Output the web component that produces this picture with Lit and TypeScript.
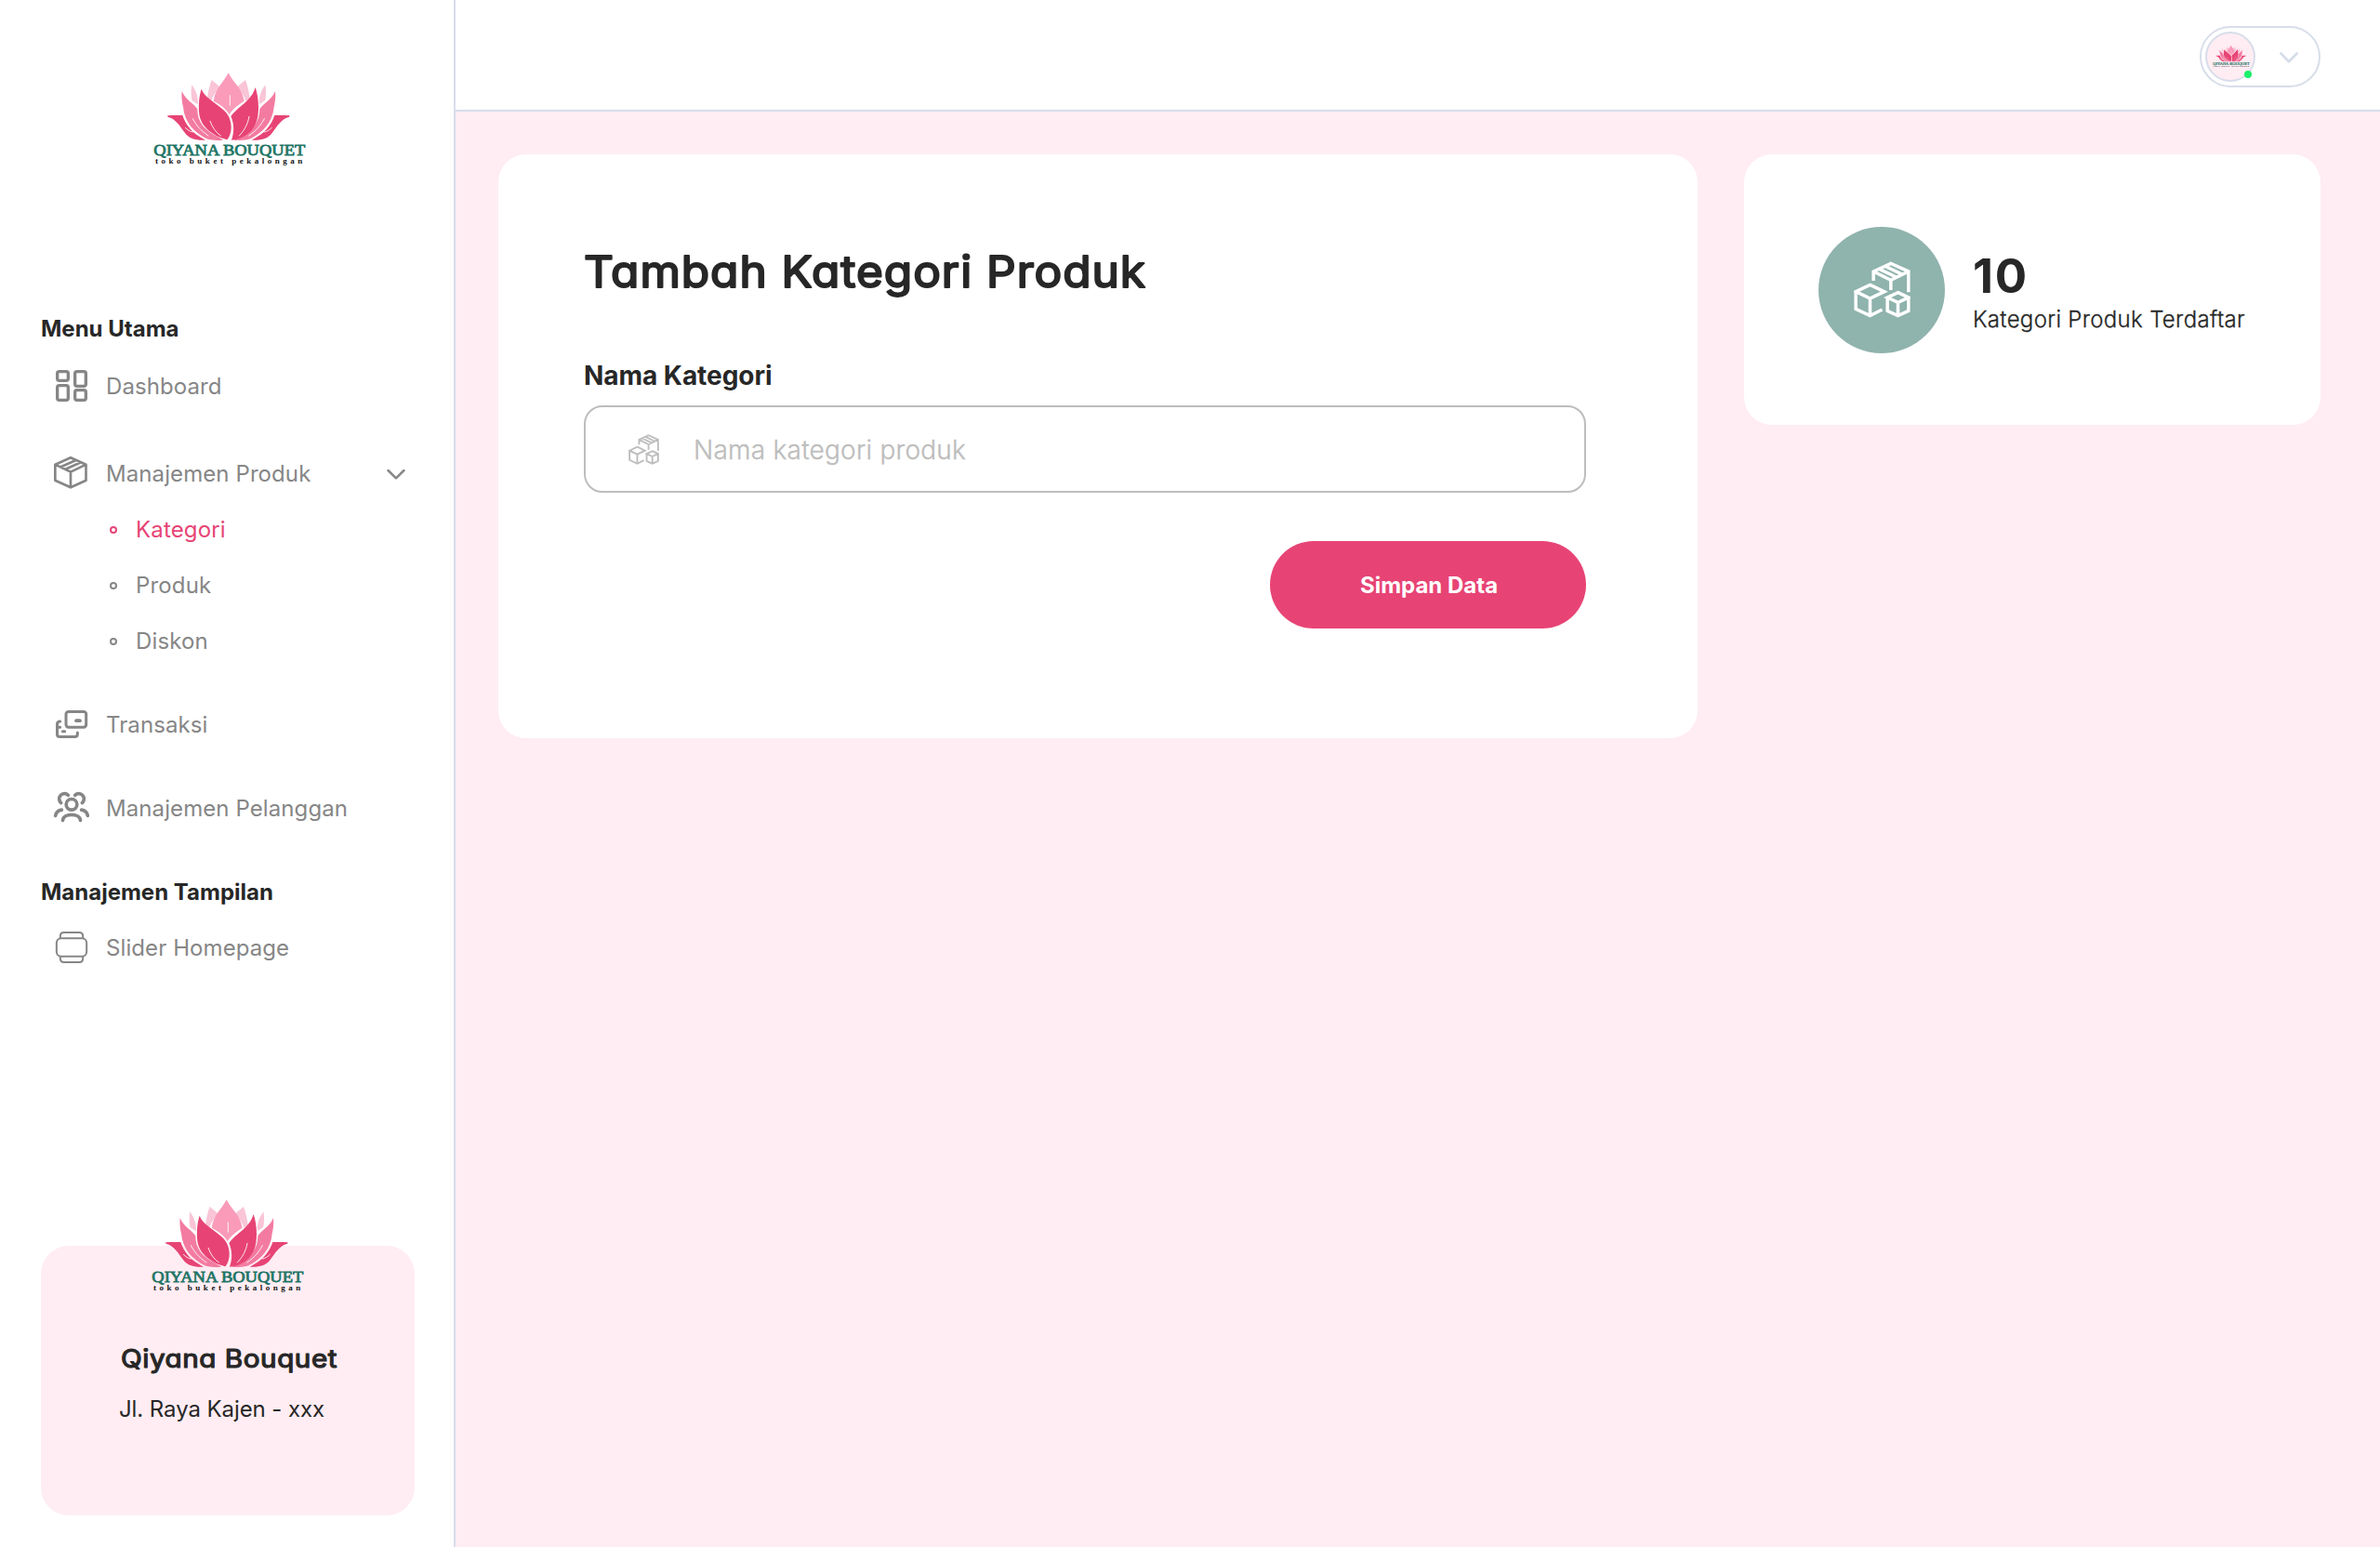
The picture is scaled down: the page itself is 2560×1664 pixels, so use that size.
import { LitElement, html, svg, css } from "lit";
import { customElement, property } from "lit/decorators.js";
import { classMap } from "lit/directives/class-map.js";

const halfFlower = svg`
  <path fill="#f9c5d7" d="M263 78 L291 101 C276 116 266 130 262 146 L249 136 C252 114 256 96 263 78Z"/>
  <path fill="#f9c5d7" d="M199 94 C209 108 215 120 218 138 L219 156 C212 152 205 149 199 143 C196 125 196 110 199 94Z"/>
  <path fill="#f37ba1" d="M167 114 C178 142 204 152 217 172 C217 215 240 240 283 262 C290 266 296 269 300 272 C280 274 262 273 247 268 C206 246 175 215 171 165 C167 150 165 130 167 114Z"/>
  <path fill="#e74475" d="M121 193 C138 191 152 192 169 192 C180 225 200 250 243 272 C215 274 190 268 177 249 C160 226 148 204 121 197Z"/>
  <path class="vein" d="M202 203 C214 225 226 240 252 258"/>
  <path class="vein" d="M178 232 C186 240 192 244 202 246"/>`;

@customElement("brand-logo")
export class BrandLogo extends LitElement {
  static styles = css`
    :host { display: block; }
    svg { display: block; width: 100%; height: 100%; overflow: visible; }
    .vein { fill: none; stroke: #fff; stroke-width: 2.6; stroke-linecap: round; }
    .name { font: 400 53px "Liberation Serif", serif; fill: #1f7566; stroke: #1f7566; stroke-width: 2.4px; }
    .tag { font: 700 27px "Liberation Serif", serif; fill: #151515; }
  `;
  render() {
    return html`<svg viewBox="0 0 630 390">
      ${halfFlower}
      <g transform="translate(635 0) scale(-1 1)">${halfFlower}</g>
      <path fill="#f99bb9" d="M317 55 C301 88 276 102 269 146 C291 158 310 170 320 190 C330 172 350 158 368 146 C360 102 333 88 317 55Z"/>
      <path fill="#e74475" d="M230 107 C246 147 306 162 320 200 C331 228 326 254 313 271 C275 262 230 235 223 190 C220 160 222 130 230 107Z"/>
      <path fill="#e74475" d="M404 102 C392 147 345 165 325 195 C337 222 335 250 327 272 C372 268 405 240 412 195 C417 160 412 125 404 102Z"/>
      <path class="vein" d="M258 211 C266 232 276 247 292 258"/>
      <path class="vein" d="M384 196 C379 222 369 240 352 258"/>
      <path class="vein" d="M322 128 V160"/>
      <text class="name" x="76" y="321" textLength="489" lengthAdjust="spacingAndGlyphs">QIYANA BOUQUET</text>
      <text class="tag" x="81" y="348" textLength="475">toko buket pekalongan</text>
    </svg>`;
  }
}

const icons = {
  dashboard: svg`<svg viewBox="81 228 120 120" fill="none" stroke="currentColor" stroke-width="10">
    <rect x="95" y="239" width="35" height="29" rx="6"/><rect x="152" y="239" width="35" height="47" rx="6"/>
    <rect x="95" y="284" width="35" height="47" rx="6"/><rect x="152" y="299" width="35" height="32" rx="6"/></svg>`,
  box: svg`<svg viewBox="81 510 120 120" fill="none" stroke="currentColor" stroke-width="8" stroke-linejoin="round">
    <path d="M138 516.500 L187.500 539 V590 L138 613 L88 590 V539 Z M88 539 L138 563 L187.500 539 M138 563 V613 M106 547 L155 525 M121 554 L171 532"/></svg>`,
  cards: svg`<svg viewBox="81 60 120 120" fill="none" stroke="currentColor" stroke-width="9" stroke-linecap="round">
    <rect x="123" y="76.500" width="65" height="50" rx="8"/><path d="M104 108 H102 Q94.500 109 94.500 117 V149 Q94.500 157.500 103 157.500 H151 Q160 157.500 160 149 V144 M95 127 H104 M112 140 H119"/>
    <path stroke-width="11" d="M156 105.500 H168"/></svg>`,
  people: svg`<svg viewBox="81 330 120 120" fill="none" stroke="currentColor" stroke-width="11" stroke-linecap="round">
    <circle cx="141" cy="376" r="17.500"/><path d="M112.500 427 C114 403 168 403 169.500 427"/>
    <path d="M89 412 C91 402 98 395 109 393.500 M193 412 C191 402 184 395 173 393.500"/>
    <path d="M107 371 A17 17 0 1 1 130 346 M175 371 A17 17 0 1 0 152 346"/></svg>`,
  slider: svg`<svg viewBox="81 780 120 120" fill="none" stroke="currentColor" stroke-width="6">
    <rect x="92.500" y="808" width="97" height="58" rx="15"/>
    <path d="M104.500 808 V801 Q104.500 789 116.500 789 H165.500 Q177.500 789 177.500 801 V808 M104.500 866 V873 Q104.500 885 116.500 885 H165.500 Q177.500 885 177.500 873 V866"/></svg>`,
};

const boxes = html`<svg viewBox="131 124 182 183" fill="none" stroke="currentColor" stroke-width="10.500">
  <path d="M194 187 V157 L250 131 L307 157 V224 M194 157 L250 185 L307 157 M250 185 V217 M213 149 L269 176 M232 140 L288 167"/>
  <path d="M183 200 L229 222 L183 244 L137 222 Z M137 222 V278 L183 300 L222 280 M183 244 V300"/>
  <path d="M273 225 L307 241 L273 257 L239 241 Z M239 241 V284 L273 300 L307 284 V241 M273 257 V300"/></svg>`;

@customElement("nav-row")
export class NavRow extends LitElement {
  @property() icon = "";
  @property() label = "";
  @property({ type: Boolean }) expandable = false;
  static styles = css`
    :host { display: flex; align-items: center; height: 60px; padding: 0 50px 0 57px; color: #868686; font-size: 24px; line-height: 60px; letter-spacing: 0.09px; }
    .icon { display: flex; width: 40px; height: 40px; margin-right: 17px; }
    .icon svg { width: 40px; height: 40px; }
    .label { flex: 1; white-space: nowrap; }
    .chevron { width: 24px; height: 16px; }
  `;
  render() {
    return html`<span class="icon">${icons[this.icon as keyof typeof icons]}</span>
      <span class="label">${this.label}</span>
      ${this.expandable
        ? html`<svg class="chevron" viewBox="0 0 24 16" fill="none" stroke="currentColor" stroke-width="2.500" stroke-linecap="round" stroke-linejoin="round"><path d="M3.500 4 L12 12.300 L20.500 4"/></svg>`
        : ""}`;
  }
}

@customElement("app-root")
export class AppRoot extends LitElement {
  static styles = css`
    :host { display: block; font-family: Inter, sans-serif; color: #272727; }
    * { box-sizing: border-box; }
    .page { display: flex; width: 2560px; height: 1664px; background: #ffedf3; overflow: hidden; }
    .sidebar { display: flex; flex-direction: column; width: 490px; flex: none; background: #fff; border-right: 2px solid #d7ddea; }
    .logo { width: 210px; height: 130px; margin: 60px 0 134px 140px; }
    .section { height: 60px; padding-left: 44px; font-size: 24px; font-weight: 700; line-height: 60px; }
    .gap-s { margin-top: 2px; }
    .gap-l { margin-top: 34px; }
    .gap-m { margin-top: 30px; }
    .sub { display: flex; align-items: center; gap: 20px; height: 60px; padding-left: 118px; color: #868686; font-size: 24px; line-height: 60px; letter-spacing: 0.15px; }
    .sub.active { color: #e74475; }
    .bullet { width: 8px; height: 8px; border: 2px solid currentColor; border-radius: 50%; }
    .store { display: flex; flex-direction: column; width: 402px; height: 290px; margin: auto 0 34px 44px; background: #ffedf3; border-radius: 30px; }
    .store brand-logo { width: 210px; height: 130px; margin: -68px 0 0 94px; }
    .store-name { height: 48px; margin: 36px 0 0 86px; }
    .address { margin: 10px 0 0 84px; line-height: 40px; font-size: 24px; letter-spacing: -0.08px; }
    .rounded svg { display: block; overflow: visible; }
    .rounded text { font-weight: 400; font-feature-settings: "cv11" 1; fill: #272727; stroke: #272727; stroke-linejoin: round; }
    .content { display: flex; flex-direction: column; flex: 1; }
    .topbar { display: flex; align-items: center; justify-content: flex-end; height: 120px; padding: 4px 64px 0 0; background: #fff; border-bottom: 2px solid #d7ddea; }
    .account { display: flex; align-items: center; justify-content: space-between; width: 130px; height: 66px; padding: 0 22px 0 4px; border: 2px solid #d7ddea; border-radius: 33px; }
    .avatar { position: relative; display: flex; align-items: center; justify-content: center; width: 54px; height: 54px; background: #ffedf3; border: 2px solid #d7ddea; border-radius: 50%; }
    .avatar brand-logo { width: 51px; height: 32px; margin-bottom: 3px; flex: none; }
    .status { position: absolute; right: 2px; bottom: 2px; width: 8px; height: 8px; border-radius: 50%; background: #1af06b; }
    .account-chevron { width: 20px; height: 12px; margin-top: 1px; color: #d7ddea; }
    .main { display: flex; align-items: flex-start; gap: 50px; padding: 46px 64px 0 46px; }
    .card { background: #fff; border-radius: 30px; }
    .form { display: flex; flex-direction: column; width: 1290px; height: 628px; padding: 92px 120px 0 92px; }
    .title { height: 70px; margin: 0; }
    .title text { font-size: 46.5px; stroke-width: 2px; letter-spacing: 0.9px; }
    .store-name text { font-size: 27px; stroke-width: 1.2px; letter-spacing: 0.5px; }
    .field-label { margin-top: 56px; font-size: 28px; line-height: 40px; font-weight: 700; letter-spacing: -0.05px; }
    .field { display: flex; align-items: center; gap: 37px; height: 94px; margin-top: 12px; padding: 0 46px; border: 2px solid #bdbdbd; border-radius: 20px; color: #bdbdbd; }
    .field svg { width: 33px; height: 33px; flex: none; }
    .field input { flex: 1; border: 0; outline: 0; padding: 2px 0 0; background: none; font: 300 28px Inter, sans-serif; letter-spacing: 0.24px; }
    .field input::placeholder { color: #bdbdbd; opacity: 1; -webkit-text-stroke: 0.35px #bdbdbd; }
    .save { align-self: flex-end; width: 340px; height: 94px; margin-top: 52px; padding: 0 0 0 2px; border: 0; border-radius: 47px; background: #e74475; color: #fff; font: 700 24px Inter, sans-serif; }
    .stat { display: flex; align-items: center; gap: 30px; width: 620px; height: 291px; padding-left: 80px; }
    .badge { display: flex; align-items: center; justify-content: center; width: 136px; height: 136px; border-radius: 50%; background: #8fb3ad; color: #fff; }
    .badge svg { width: 61px; height: 61px; }
    .figures { padding-top: 12px; }
    .count { font-size: 51px; font-weight: 700; line-height: 52px; letter-spacing: 1.8px; }
    .caption { font-size: 24px; font-weight: 300; line-height: 41px; letter-spacing: 0.32px; white-space: nowrap; -webkit-text-stroke: 0.3px #272727; }
  `;
  private subItems = ["Kategori", "Produk", "Diskon"];
  render() {
    return html`<div class="page">
      <aside class="sidebar">
        <brand-logo class="logo"></brand-logo>
        <div class="section">Menu Utama</div>
        <nav-row class="gap-s" icon="dashboard" label="Dashboard"></nav-row>
        <nav-row class="gap-l" icon="box" label="Manajemen Produk" expandable></nav-row>
        ${this.subItems.map((s, i) => html`<div class=${classMap({ sub: true, active: i === 0 })}><span class="bullet"></span>${s}</div>`)}
        <nav-row class="gap-m" icon="cards" label="Transaksi"></nav-row>
        <nav-row class="gap-m" icon="people" label="Manajemen Pelanggan"></nav-row>
        <div class="section gap-m">Manajemen Tampilan</div>
        <nav-row icon="slider" label="Slider Homepage"></nav-row>
        <div class="store">
          <brand-logo></brand-logo>
          <div class="store-name rounded"><svg width="240" height="48"><text x="0" y="33" textLength="233" lengthAdjust="spacingAndGlyphs">Qiyana Bouquet</text></svg></div>
          <div class="address">Jl. Raya Kajen - xxx</div>
        </div>
      </aside>
      <div class="content">
        <header class="topbar">
          <div class="account">
            <div class="avatar"><brand-logo></brand-logo><span class="status"></span></div>
            <svg class="account-chevron" viewBox="0 0 20 12" fill="none" stroke="currentColor" stroke-width="2.800" stroke-linecap="round" stroke-linejoin="round"><path d="M1.500 1.500 L10 10.300 L18.500 1.500"/></svg>
          </div>
        </header>
        <main class="main">
          <section class="card form">
            <h1 class="title rounded"><svg width="620" height="70"><text x="0" y="51" textLength="605" lengthAdjust="spacingAndGlyphs">Tambah Kategori Produk</text></svg></h1>
            <label class="field-label">Nama Kategori</label>
            <div class="field">${boxes}<input placeholder="Nama kategori produk" /></div>
            <button class="save">Simpan Data</button>
          </section>
          <section class="card stat">
            <div class="badge">${boxes}</div>
            <div class="figures">
              <div class="count">10</div>
              <div class="caption">Kategori Produk Terdaftar</div>
            </div>
          </section>
        </main>
      </div>
    </div>`;
  }
}
